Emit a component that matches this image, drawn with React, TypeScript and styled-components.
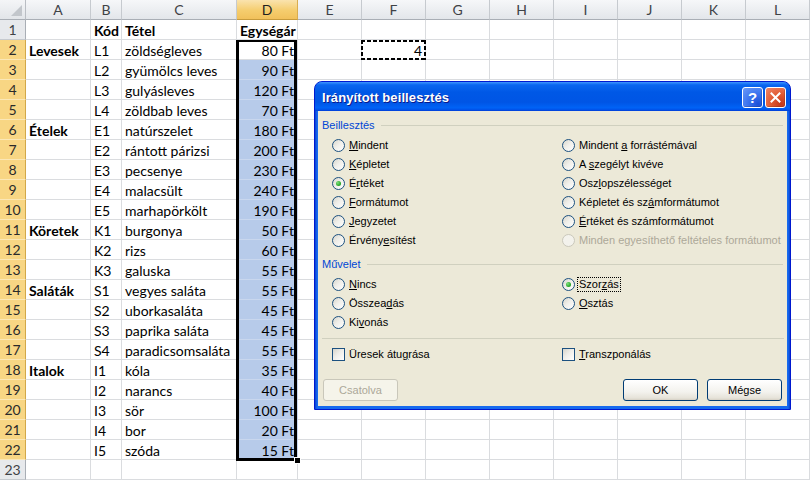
import React from "react";
import styled, { createGlobalStyle, css } from "styled-components";

const GlobalStyle = createGlobalStyle`
  html, body { margin: 0; padding: 0; background: #fff; overflow: hidden; }
  #root { width: 810px; height: 481px; }
`;

const COLS = [26, 65, 31, 115, 61, 64, 64, 64, 64, 64, 64, 64, 64];
const LETTERS = ["A", "B", "C", "D", "E", "F", "G", "H", "I", "J", "K", "L"];

type Row = [string, string, string, number];
const ROWS: Row[] = [
  ["Levesek", "L1", "zöldségleves", 80],
  ["", "L2", "gyümölcs leves", 90],
  ["", "L3", "gulyásleves", 120],
  ["", "L4", "zöldbab leves", 70],
  ["Ételek", "E1", "natúrszelet", 180],
  ["", "E2", "rántott párizsi", 200],
  ["", "E3", "pecsenye", 230],
  ["", "E4", "malacsült", 240],
  ["", "E5", "marhapörkölt", 190],
  ["Köretek", "K1", "burgonya", 50],
  ["", "K2", "rizs", 60],
  ["", "K3", "galuska", 55],
  ["Saláták", "S1", "vegyes saláta", 55],
  ["", "S2", "uborkasaláta", 45],
  ["", "S3", "paprika saláta", 45],
  ["", "S4", "paradicsomsaláta", 55],
  ["Italok", "I1", "kóla", 35],
  ["", "I2", "narancs", 40],
  ["", "I3", "sör", 100],
  ["", "I4", "bor", 20],
  ["", "I5", "szóda", 15],
];

const Page = styled.div`
  position: relative;
  width: 810px;
  height: 481px;
  overflow: hidden;
  background: #fff;
`;

const Sheet = styled.div`
  display: grid;
  grid-template-columns: ${COLS.map((c) => c + "px").join(" ")};
  grid-auto-rows: 20px;
  font-family: "Lato", "Liberation Sans", sans-serif;
  font-size: 14px;
  color: #000;
`;

const Corner = styled.div`
  position: relative;
  box-sizing: border-box;
  background: linear-gradient(#f4f5f7, #e2e5e9);
  border-right: 1px solid #b9bdc3;
  border-bottom: 1px solid #a9aeb5;
  &::after {
    content: "";
    position: absolute;
    right: 3px;
    bottom: 3px;
    border-left: 11px solid transparent;
    border-bottom: 11px solid #c2c6cb;
  }
`;

const ColHeader = styled.div<{ $selected?: boolean }>`
  box-sizing: border-box;
  display: flex;
  align-items: center;
  justify-content: center;
  font-size: 14px;
  color: ${(p) => (p.$selected ? "#1f1f1f" : "#3f4246")};
  background: ${(p) =>
    p.$selected
      ? "linear-gradient(#fae3ae, #f5cd6e 55%, #f1c15b)"
      : "linear-gradient(#f6f7f9, #e3e6ea)"};
  border-right: 1px solid ${(p) => (p.$selected ? "#d9ad50" : "#c6cacf")};
  border-bottom: 1px solid ${(p) => (p.$selected ? "#c79b3c" : "#a9aeb5")};
`;

const RowHeader = styled.div<{ $selected?: boolean }>`
  box-sizing: border-box;
  display: flex;
  align-items: center;
  justify-content: center;
  font-size: 14px;
  color: ${(p) => (p.$selected ? "#2a2a2a" : "#3f4246")};
  background: ${(p) => (p.$selected ? "#f8d684" : "#e7e9ec")};
  border-right: 1px solid ${(p) => (p.$selected ? "#d2a849" : "#a9aeb5")};
  border-bottom: 1px solid ${(p) => (p.$selected ? "#fbe7b6" : "#c6cacf")};
`;

const Cell = styled.div<{ $align?: "left" | "right"; $bold?: boolean }>`
  position: relative;
  box-sizing: border-box;
  display: flex;
  align-items: center;
  justify-content: ${(p) => (p.$align === "right" ? "flex-end" : "flex-start")};
  padding: 1px 3px 0 3px;
  white-space: nowrap;
  font-weight: ${(p) => (p.$bold ? 700 : 400)};
  border-right: 1px solid #dadcdf;
  border-bottom: 1px solid #dadcdf;
`;

const SelCell = styled(Cell)<{ $active?: boolean; $first?: boolean; $last?: boolean }>`
  background: ${(p) => (p.$active ? "#fff" : "#b7cbea")};
  border-right-color: ${(p) => (p.$active ? "#dadcdf" : "#c9d7ee")};
  border-bottom-color: ${(p) => (p.$active ? "#dadcdf" : "#c9d7ee")};
  &::after {
    content: "";
    position: absolute;
    left: -1px;
    right: 0;
    top: 0;
    bottom: ${(p) => (p.$last ? "-2px" : "-1px")};
    border-left: 3px solid #000;
    border-right: 3px solid #000;
    border-top: ${(p) => (p.$first ? "2px solid #000" : "0")};
    border-bottom: ${(p) => (p.$last ? "3px solid #000" : "0")};
    pointer-events: none;
    z-index: 2;
  }
  ${(p) =>
    p.$last &&
    css`
      &::before {
        content: "";
        position: absolute;
        right: -3px;
        bottom: -4px;
        width: 5px;
        height: 5px;
        background: #000;
        outline: 1px solid #fff;
        z-index: 3;
      }
    `}
`;

const CopyCell = styled(Cell)`
  &::after {
    content: "";
    position: absolute;
    left: -1px;
    right: -1px;
    top: 0;
    bottom: -1px;
    background:
      repeating-linear-gradient(90deg, #000 0 4px, transparent 4px 6px) top left / 100% 2px no-repeat,
      repeating-linear-gradient(90deg, #000 0 4px, transparent 4px 6px) bottom left / 100% 2px no-repeat,
      repeating-linear-gradient(180deg, #000 0 4px, transparent 4px 6px) top left / 2px 100% no-repeat,
      repeating-linear-gradient(180deg, #000 0 4px, transparent 4px 6px) top right / 2px 100% no-repeat;
    pointer-events: none;
  }
`;

/* ---------- Dialog ---------- */

const Dialog = styled.div`
  position: absolute;
  left: 314px;
  top: 81px;
  width: 477px;
  height: 329px;
  box-sizing: border-box;
  display: flex;
  flex-direction: column;
  border: 1px solid #0019cf;
  border-radius: 8px 8px 0 0;
  background: linear-gradient(90deg, #0a3fd0 0, #166aee 2px, #166aee calc(100% - 2px), #0a3fd0 100%);
  font-family: "Liberation Sans", Arial, sans-serif;
  font-size: 11px;
  color: #000;
  z-index: 10;
`;

const TitleBar = styled.div`
  height: 28px;
  flex: none;
  display: flex;
  align-items: center;
  padding: 1px 4px 0 7px;
  border-radius: 7px 7px 0 0;
  background: linear-gradient(
    180deg,
    #3d95ff 0%,
    #0a66f0 10%,
    #0058e6 35%,
    #0055e5 70%,
    #0062f5 88%,
    #0058ee 94%,
    #003dd7 100%
  );
`;

const Title = styled.div`
  flex: 1;
  color: #fff;
  font-weight: 700;
  font-size: 13px;
  text-shadow: 1px 1px 0 #0a1a8a;
  letter-spacing: 0.1px;
`;

const TitleButtons = styled.div`
  display: flex;
  gap: 2px;
`;

const TitleButton = styled.div<{ $kind: "help" | "close" }>`
  width: 21px;
  height: 21px;
  box-sizing: border-box;
  border: 1px solid #fff;
  border-radius: 3px;
  display: flex;
  align-items: center;
  justify-content: center;
  color: #fff;
  font-weight: 700;
  font-size: 15px;
  background: ${(p) =>
    p.$kind === "help"
      ? "radial-gradient(circle at 80% 85%, #1c4fd8 0%, #3a73ee 45%, #6b9af8 100%)"
      : "radial-gradient(circle at 80% 85%, #c3381a 0%, #e05a32 45%, #f0876a 100%)"};
  box-shadow: inset -1px -1px 0 rgba(0, 0, 0, 0.15);
`;

const Body = styled.div`
  flex: 1;
  display: flex;
  flex-direction: column;
  margin: 0 3px 3px 3px;
  padding: 7px 3px 0 4px;
  background: #ece9d8;
`;

const GroupHeader = styled.div<{ $gap?: number }>`
  display: flex;
  align-items: center;
  height: 14px;
  margin-top: ${(p) => p.$gap ?? 0}px;
  color: #0046d5;
`;

const GroupLine = styled.div`
  flex: 1;
  height: 1px;
  margin: 1px 1px 0 6px;
  background: #d0d0bf;
`;

const OptionGrid = styled.div<{ $rows: number; $gap?: number }>`
  display: grid;
  grid-template-columns: 230px 1fr;
  grid-template-rows: repeat(${(p) => p.$rows}, 19px);
  grid-auto-flow: column;
  padding-left: 10px;
  margin-top: ${(p) => p.$gap ?? 0}px;
`;

const Option = styled.div<{ $disabled?: boolean }>`
  display: flex;
  align-items: center;
  gap: 3px;
  white-space: nowrap;
  color: ${(p) => (p.$disabled ? "#aca899" : "#000")};
`;

const RadioCircle = styled.span<{ $checked?: boolean; $disabled?: boolean }>`
  width: 13px;
  height: 13px;
  flex: none;
  box-sizing: border-box;
  border-radius: 50%;
  border: 1px solid ${(p) => (p.$disabled ? "#cac8bb" : "#1c5180")};
  background: ${(p) =>
    p.$disabled
      ? "#f3f2ec"
      : "linear-gradient(135deg, #d6d5cc 0%, #efeee9 45%, #ffffff 100%)"};
  display: flex;
  align-items: center;
  justify-content: center;
  ${(p) =>
    p.$checked &&
    css`
      &::after {
        content: "";
        width: 5px;
        height: 5px;
        border-radius: 50%;
        background: radial-gradient(circle at 35% 35%, #7ee07e, #21a121 70%);
      }
    `}
`;

const CheckBox = styled.span`
  width: 13px;
  height: 13px;
  flex: none;
  box-sizing: border-box;
  border: 1px solid #1c5180;
  background: linear-gradient(135deg, #d6d5cc 0%, #efeee9 45%, #ffffff 100%);
`;

const Label = styled.span<{ $focus?: boolean }>`
  padding: 0 1px;
  line-height: 13px;
  ${(p) =>
    p.$focus &&
    css`
      outline: 1px dotted #000;
    `}
`;

const Key = styled.span`
  text-decoration: underline;
  text-underline-offset: 1px;
`;

const Separator = styled.div`
  height: 1px;
  margin: 6px 0 0 0;
  background: #d0d0bf;
`;

const ButtonRow = styled.div`
  display: flex;
  align-items: center;
  gap: 9px;
  margin-top: 15px;
  padding: 0 2px 0 1px;
`;

const Spacer = styled.div`
  flex: 1;
`;

const Button = styled.div<{ $disabled?: boolean }>`
  width: 75px;
  height: 22px;
  box-sizing: border-box;
  display: flex;
  align-items: center;
  justify-content: center;
  border-radius: 3px;
  border: 1px solid ${(p) => (p.$disabled ? "#c9c7ba" : "#003c74")};
  color: ${(p) => (p.$disabled ? "#aca899" : "#000")};
  background: ${(p) =>
    p.$disabled
      ? "#f5f4ea"
      : "linear-gradient(180deg, #ffffff 0%, #f3f2ed 60%, #e6e3d9 90%, #d6d0c5 100%)"};
`;

type Opt = {
  pre: string;
  key?: string;
  post?: string;
  checked?: boolean;
  disabled?: boolean;
  focus?: boolean;
};

const pasteOptions: Opt[] = [
  { pre: "", key: "M", post: "indent" },
  { pre: "", key: "K", post: "épletet" },
  { pre: "É", key: "r", post: "téket", checked: true },
  { pre: "", key: "F", post: "ormátumot" },
  { pre: "", key: "J", post: "egyzetet" },
  { pre: "Érvény", key: "e", post: "sítést" },
  { pre: "Mindent ", key: "a", post: " forrástémával" },
  { pre: "A ", key: "s", post: "zegélyt kivéve" },
  { pre: "Osz", key: "l", post: "opszélességet" },
  { pre: "Képletet és sz", key: "á", post: "mformátumot" },
  { pre: "", key: "É", post: "rtéket és számformátumot" },
  { pre: "Minden egyesíthető feltételes formátumot", disabled: true },
];

const opOptions: Opt[] = [
  { pre: "", key: "N", post: "incs" },
  { pre: "Összea", key: "d", post: "ás" },
  { pre: "Ki", key: "v", post: "onás" },
  { pre: "Szor", key: "z", post: "ás", checked: true, focus: true },
  { pre: "", key: "O", post: "sztás" },
];

function OptionText({ o }: { o: Opt }) {
  return (
    <Label $focus={o.focus}>
      {o.pre}
      {o.key && <Key>{o.key}</Key>}
      {o.post}
    </Label>
  );
}

function RadioOption({ o }: { o: Opt }) {
  return (
    <Option $disabled={o.disabled}>
      <RadioCircle $checked={o.checked} $disabled={o.disabled} />
      <OptionText o={o} />
    </Option>
  );
}

function CloseIcon() {
  return (
    <svg width="11" height="11" viewBox="0 0 11 11">
      <path d="M1.5 1.5 L9.5 9.5 M9.5 1.5 L1.5 9.5" stroke="#fff" strokeWidth="2" strokeLinecap="square" />
    </svg>
  );
}

function PasteDialog() {
  return (
    <Dialog>
      <TitleBar>
        <Title>Irányított beillesztés</Title>
        <TitleButtons>
          <TitleButton $kind="help">?</TitleButton>
          <TitleButton $kind="close">
            <CloseIcon />
          </TitleButton>
        </TitleButtons>
      </TitleBar>
      <Body>
        <GroupHeader>
          Beillesztés
          <GroupLine />
        </GroupHeader>
        <OptionGrid $rows={6} $gap={4}>
          {pasteOptions.map((o, i) => (
            <RadioOption key={i} o={o} />
          ))}
        </OptionGrid>
        <GroupHeader $gap={7}>
          Művelet
          <GroupLine />
        </GroupHeader>
        <OptionGrid $rows={3} $gap={4}>
          {opOptions.map((o, i) => (
            <RadioOption key={i} o={o} />
          ))}
        </OptionGrid>
        <Separator />
        <OptionGrid $rows={1} $gap={6}>
          <Option>
            <CheckBox />
            <Label>
              Üresek átu<Key>g</Key>rása
            </Label>
          </Option>
          <Option>
            <CheckBox />
            <Label>
              <Key>T</Key>ranszponálás
            </Label>
          </Option>
        </OptionGrid>
        <ButtonRow>
          <Button $disabled>Csatolva</Button>
          <Spacer />
          <Button>OK</Button>
          <Button>Mégse</Button>
        </ButtonRow>
      </Body>
    </Dialog>
  );
}

function EmptyCells({ count }: { count: number }) {
  return (
    <>
      {Array.from({ length: count }, (_, i) => (
        <Cell key={i} />
      ))}
    </>
  );
}

export default function App() {
  return (
    <Page>
      <GlobalStyle />
      <Sheet>
        <Corner />
        {LETTERS.map((l) => (
          <ColHeader key={l} $selected={l === "D"}>
            {l}
          </ColHeader>
        ))}

        <RowHeader>1</RowHeader>
        <Cell />
        <Cell $bold>Kód</Cell>
        <Cell $bold>Tétel</Cell>
        <Cell $bold>Egységár</Cell>
        <EmptyCells count={8} />

        {ROWS.map((r, i) => {
          const n = i + 2;
          return (
            <React.Fragment key={n}>
              <RowHeader $selected>{n}</RowHeader>
              <Cell $bold>{r[0]}</Cell>
              <Cell>{r[1]}</Cell>
              <Cell>{r[2]}</Cell>
              <SelCell $align="right" $active={i === 0} $first={i === 0} $last={i === ROWS.length - 1}>
                {r[3]} Ft
              </SelCell>
              <Cell />
              {i === 0 ? <CopyCell $align="right">4</CopyCell> : <Cell />}
              <EmptyCells count={6} />
            </React.Fragment>
          );
        })}

        <RowHeader>23</RowHeader>
        <EmptyCells count={12} />
      </Sheet>
      <PasteDialog />
    </Page>
  );
}
